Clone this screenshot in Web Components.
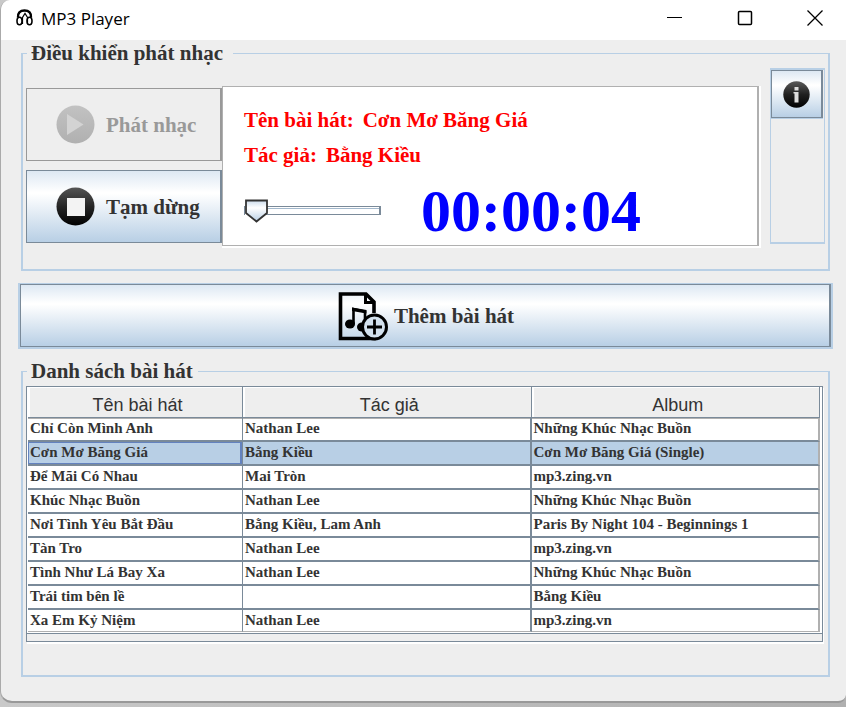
<!DOCTYPE html>
<html lang="vi">
<head>
<meta charset="utf-8">
<title>MP3 Player</title>
<style>
html{height:100%}
body{margin:0;min-height:100%;display:flex;background:linear-gradient(90deg,#c9c9c9,#b0b0b0);font-family:"Liberation Serif",serif;font-weight:bold;font-size:21px;color:#333;
--line:#b8cfe5;--dark:#7a8a99;--metal:linear-gradient(#dde8f3 0,#fff 30%,#fff 32%,#b8cfe5 100%)}
</style>
</head>
<body>
<player-window>
  <title-bar>MP3 Player</title-bar>
  <titled-panel caption="Điều khiển phát nhạc" style="--gap:10px;--pad:2px 3px 21px 3px">
    <control-deck></control-deck>
  </titled-panel>
  <add-button>Thêm bài hát</add-button>
  <titled-panel caption="Danh sách bài hát" style="--gap:5px;--pad:2px 5px 33px 3px">
    <song-table></song-table>
  </titled-panel>
</player-window>
<script>
const define=(name,html,init)=>customElements.define(name,class extends HTMLElement{
  constructor(){super();const t=document.createElement('template');t.innerHTML=html;
    this.attachShadow({mode:'open'}).append(t.content.cloneNode(true));}
  connectedCallback(){if(init)init(this,this.shadowRoot);}
});

define('player-window',`<style>
:host{flex:1;display:flex;flex-direction:column;box-sizing:border-box;margin-bottom:4px;background:#eee;border-left:1px solid #aaa;border-bottom:2px solid #999;border-radius:10px 0 8px 12px;overflow:hidden}
</style><slot></slot>`);

define('title-bar',`<style>
:host{display:flex;align-items:center;height:40px;background:#fff;color:#000;font:17px/24px "Open Sans","Noto Sans",sans-serif;padding-left:15px}
.mark{width:17px;height:18px;margin-right:8px;margin-bottom:4px}
h1{font:inherit;margin:0 auto 2px 0}
button{width:70px;height:36px;margin:0 0 4px;padding:0;border:0;background:none;display:grid;place-items:center}
button:last-child{width:62px;margin-left:4px}
</style>
<svg class="mark" viewBox="0 0 17 18"><g fill="none" stroke="#000"><path d="M2 8.500C1.500 4 4 1.500 8.500 1.500S15.500 4 15 8.500" stroke-width="2.400"/><path d="M6.500 15V8.500L9 4.500l2.500 4V15" stroke-width="1.200"/><ellipse cx="3.500" cy="12" rx="2.500" ry="3.800" stroke-width="1.600"/><ellipse cx="13.500" cy="12" rx="2.500" ry="3.800" stroke-width="1.600"/></g></svg>
<h1><slot></slot></h1>
<button aria-label="Minimize"><svg width="16" height="16"><path d="M0 7.500h15" stroke="#000"/></svg></button>
<button aria-label="Maximize"><svg width="16" height="16"><rect x="1.500" y="1.500" width="13" height="13" rx="1" fill="none" stroke="#000" stroke-width="1.500"/></svg></button>
<button aria-label="Close"><svg width="16" height="16"><path d="M.5.5l15 15m0-15l-15 15" stroke="#000" stroke-width="1.300"/></svg></button>`);

define('titled-panel',`<style>
:host{display:block;margin:0 16px 0 20px}
fieldset{margin:0;min-width:0;border:2px solid var(--line);border-top-width:1px;padding:var(--pad)}
legend{padding:0 var(--gap) 0 4px;margin-left:1px;line-height:26px}
</style><fieldset><legend></legend><slot></slot></fieldset>`,(h,r)=>{r.querySelector('legend').textContent=h.getAttribute('caption')});

define('control-deck',`<style>
:host{display:flex;align-items:flex-start}
.side{display:flex;flex-direction:column;gap:9px;flex:0 0 196px;padding-top:20px}
player-display{flex:1;margin-top:18px}
info-bar{margin-left:9px}
</style>
<div class="side"><media-button kind="play" off>Phát nhạc</media-button><media-button kind="stop">Tạm dừng</media-button></div>
<player-display></player-display><info-bar></info-bar>`);

define('media-button',`<style>
:host{display:block}
button{width:100%;height:73px;box-sizing:border-box;display:flex;align-items:center;gap:11px;padding:0 0 0 29px;border:1px solid var(--dark);border-right-width:2px;background:var(--metal);font:inherit;color:#333;white-space:nowrap}
button:disabled{background:#eee;border-color:#999;color:#999}
svg{flex:none;display:block}
span{padding-top:2px}
</style><button><svg width="39" height="39" viewBox="0 0 39 39"><defs><linearGradient id="g" x2="0" y2="1"><stop offset="0" stop-color="#555"/><stop offset=".5" stop-color="#252525"/><stop offset="1"/></linearGradient><linearGradient id="d" x2="0" y2="1"><stop offset="0" stop-color="#c2c2c2"/><stop offset="1" stop-color="#b0b0b0"/></linearGradient></defs><circle cx="19.500" cy="19.500" r="19"/><path/></svg><span><slot></slot></span></button>`,(h,r)=>{
  const off=h.hasAttribute('off');r.querySelector('button').disabled=off;
  r.querySelector('circle').setAttribute('fill',off?'url(#d)':'url(#g)');
  const p=r.querySelector('path');p.setAttribute('fill',off?'#d3d3d3':'#f3f3f3');
  p.setAttribute('d',h.getAttribute('kind')==='play'?'M11 9L27.500 19.500 11 30Z':'M11 11H29V29H11Z');
});

define('player-display',`<style>
:host{display:block;box-sizing:border-box;background:#fff;padding:0 2px 2px 0}
section{min-height:160px;box-sizing:border-box;border:1px solid #b0b0b0;border-right-width:2px;padding:20px 0 0 21px}
p{margin:0 0 9px;color:#f00;line-height:26px;display:flex;gap:9px}
.row{display:flex;align-items:center;gap:40px;height:58px;margin-top:13px}
output{color:#00f;font-size:60px;line-height:60px;padding-top:2px}
input{appearance:none;-webkit-appearance:none;margin:0;width:137px;height:24px;background:none}
input::-webkit-slider-runnable-track{height:9px;box-sizing:border-box;border:1px solid var(--dark);border-right-width:2px;background:linear-gradient(#fff 1px,#a3b8cc 1px,#a3b8cc 2px,#fff 2px)}
input::-webkit-slider-thumb{-webkit-appearance:none;width:24px;height:24px;margin-top:-8px;border:0;background:url("data:image/svg+xml,%3Csvg xmlns='http://www.w3.org/2000/svg' viewBox='0 0 24 24'%3E%3ClinearGradient id='a' x2='0' y2='1'%3E%3Cstop stop-color='%23ccdcec'/%3E%3Cstop offset='.35' stop-color='white'/%3E%3Cstop offset='1' stop-color='%23b8cfe5'/%3E%3C/linearGradient%3E%3Cpath d='M-1 0H4V24H-1Z' fill='white'/%3E%3Cpath d='M1 1.500H22V14L11.500 22.500 1 14Z' fill='url(%23a)' stroke='%23333' stroke-width='1.800'/%3E%3C/svg%3E") center/100% 100%}
</style><section>
<p><span>Tên bài hát:</span><span>Cơn Mơ Băng Giá</span></p>
<p><span>Tác giả:</span><span>Bằng Kiều</span></p>
<div class="row"><input type="range" min="0" max="100" value="0" aria-label="Vị trí phát"><output>00:00:04</output></div>
</section>`);

define('info-bar',`<style>
:host{display:block;box-sizing:border-box;flex:0 0 55px;height:176px;border:1px solid var(--line);border-bottom-width:2px;border-top-width:2px}
button{display:grid;place-items:center;box-sizing:border-box;width:52px;height:48px;padding:0;border:1px solid var(--dark);border-right-width:2px;background:var(--metal);box-shadow:0 1px var(--line)}
</style><button aria-label="Thông tin"><svg width="27" height="27" viewBox="0 0 27 27"><defs><linearGradient id="i" x2="0" y2="1"><stop stop-color="#5a5a5a"/><stop offset=".5" stop-color="#202020"/><stop offset="1"/></linearGradient></defs><circle cx="13.500" cy="13.500" r="13.200" fill="url(#i)"/><path d="M11.500 6H15.500V9.500H11.500ZM10.500 11H15.500V21.500H11.500V12.500H10.500Z" fill="#ddd"/></svg></button>`);

define('add-button',`<style>
:host{display:block;margin:12px 13px 9px 17px;border:2px solid var(--line);border-top-width:1px}
button{width:100%;height:63px;box-sizing:border-box;border:1px solid var(--dark);border-right-width:2px;background:var(--metal);display:flex;align-items:center;justify-content:center;gap:6px;font:inherit;color:#333;padding:2px 0 0 2px}
</style><button><svg width="50" height="49" viewBox="0 0 50 49"><path d="M28 2H2.500V46.500H38M26 2H28L36 10V21" fill="none" stroke="#000" stroke-width="3.600"/><path d="M27.500 2V10.500H36" fill="none" stroke="#000" stroke-width="3"/><path d="M15.500 32V17L27 19.500V27" fill="none" stroke="#000" stroke-width="2.600"/><path d="M14 15.500L28.500 18V21.500L14 19Z"/><ellipse cx="12" cy="32" rx="5" ry="4.500"/><ellipse cx="24" cy="35" rx="5" ry="4.500"/><circle cx="36.500" cy="35" r="12" fill="#d3e1ee" stroke="#000" stroke-width="3"/><path d="M36.500 27.500V42.500M29 35H44" stroke="#000" stroke-width="2.800"/></svg><slot></slot></button>`);

const songs=[["Chỉ Còn Mình Anh","Nathan Lee","Những Khúc Nhạc Buồn"],["Cơn Mơ Băng Giá","Bằng Kiều","Cơn Mơ Băng Giá (Single)"],["Để Mãi Có Nhau","Mai Tròn","mp3.zing.vn"],["Khúc Nhạc Buồn","Nathan Lee","Những Khúc Nhạc Buồn"],["Nơi Tình Yêu Bắt Đầu","Bằng Kiều, Lam Anh","Paris By Night 104 - Beginnings 1"],["Tàn Tro","Nathan Lee","mp3.zing.vn"],["Tình Như Lá Bay Xa","Nathan Lee","Những Khúc Nhạc Buồn"],["Trái tim bên lề","","Bằng Kiều"],["Xa Em Kỷ Niệm","Nathan Lee","mp3.zing.vn"]];
define('song-table',`<style>
:host{display:block;border:1px solid var(--dark);box-shadow:1px 2px #fff;padding-bottom:7px}
.view{border-bottom:1px solid var(--dark);padding:0 2px 1px 1px;background:#fff}
table{width:100%;table-layout:fixed;border-collapse:separate;border-spacing:0;font-size:15px;line-height:20px}
col:first-child{width:215px}
th{box-sizing:border-box;height:31px;padding:5px 0 0 5px;background:#eee;border:solid var(--dark);border-width:0 1px 1px 0;box-shadow:inset 2px 1px #fff;font:18px/24px "Liberation Sans",sans-serif}
td{box-sizing:border-box;height:24px;padding:0 2px;vertical-align:top;border:solid var(--dark);border-width:0 1px 2px 0;white-space:nowrap;overflow:hidden}
td:nth-child(2){border-right-width:2px}
td:last-child{border-right:2px solid #b0b0b0}
tbody tr:first-child td{box-shadow:inset 0 1px #b0b0b0}
tbody tr:last-child td{height:22px;border-bottom:1px solid #b0b0b0}
tbody .on td{background:var(--line)}
tbody .on td:first-child{box-shadow:inset 0 0 0 1px #6382bf,inset -2px 0 #6382bf}
</style><div class="view"><table><colgroup><col><col><col></colgroup><thead><tr><th scope="col">Tên bài hát</th><th scope="col">Tác giả</th><th scope="col">Album</th></tr></thead><tbody></tbody></table></div>`,(h,r)=>{
  const b=r.querySelector('tbody');
  songs.forEach((s,i)=>{const tr=b.insertRow();if(i===1)tr.className='on';s.forEach(v=>tr.insertCell().textContent=v);});
});
</script>
</body>
</html>
